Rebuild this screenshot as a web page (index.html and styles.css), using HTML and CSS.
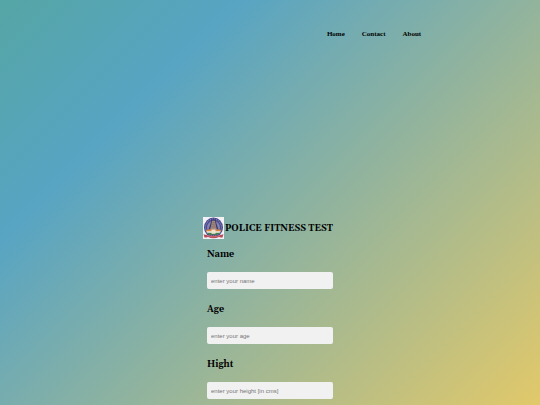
FILE: index.html
```html
<!DOCTYPE html>
<html lang="en">
<head>
    <meta charset="UTF-8">
    <meta name="viewport" content="width=device-width, initial-scale=1.0">
    <title>Police Fitness Test</title>
    <link rel="stylesheet" href="styles.css">
</head>
<body>
    <nav class="navbar">
        <a href="#home">Home</a>
        <a href="#contact">Contact</a>
        <a href="#about">About</a>
    </nav>

    <form class="container">
        <div class="title">
            <svg class="logo" viewBox="0 0 42 42" preserveAspectRatio="none" aria-hidden="true">
                <rect width="42" height="42" fill="#f3f1f5"/>
                <circle cx="21" cy="20" r="19" fill="#4a4a8e"/>
                <circle cx="21" cy="20" r="16" fill="none" stroke="#8b8abb" stroke-width="2" stroke-dasharray="2 2"/>
                <circle cx="21" cy="20" r="13" fill="#8583b0"/>
                <path d="M17 5h8l2 8 5 14H10l5-14z" fill="#39366f"/>
                <path d="M18 7h6l1 6 3 12H14l3-12z" fill="#a58b7d"/>
                <path d="M18 11h6M17 15h8M16 19h10" stroke="#6d5965"/>
                <path d="M6 25q8-3 15 0 7-3 15 0v3H6z" fill="#d98345"/>
                <path d="M7 27h28l-2 4H9z" fill="#f5f0df"/>
                <path d="M8 30h26l-4 4H12z" fill="#3f8450"/>
                <path d="M17 24h8v8h-8z" fill="#f0e4cc"/>
                <path d="M1 33q20 6 40 0l-2 6q-4 0-7-1-11 5-22 0-3 1-7 1z" fill="#b74c58"/>
                <path d="M9 36q12 4 24 0" fill="none" stroke="#d68b91"/>
            </svg>
            <h1>POLICE FITNESS TEST</h1>
        </div>

        <label for="name">Name</label>
        <input type="text" id="name" placeholder="enter your name">

        <label for="age">Age</label>
        <input type="text" id="age" placeholder="enter your age">

        <label for="height">Hight</label>
        <input type="text" id="height" placeholder="enter your height [in cms]">
    </form>
</body>
</html>
```
FILE: styles.css
```css
* {
    box-sizing: border-box;
}

body {
    margin: 0;
    min-height: 100vh;
    background: linear-gradient(135deg, #55a6a5, #57a4c3 25%, #e3c969) no-repeat;
    font-family: Gelasio, "Liberation Serif", serif;
    color: #000;
}

.navbar {
    display: flex;
    justify-content: flex-end;
    gap: 17px;
    padding: 29px 22% 0 0;
}

.navbar a {
    font: bold 7px/10px "Liberation Serif", serif;
    color: #000;
    text-decoration: none;
}

.container {
    display: flex;
    flex-direction: column;
    width: 126px;
    margin: 178px auto 0;
}

.title {
    display: flex;
    align-items: center;
    justify-content: flex-end;
    gap: 1px;
    margin-bottom: 8px;
}

.logo {
    flex: none;
    width: 21px;
    height: 22px;
}

h1 {
    margin: 0;
    padding-top: 2px;
    font-size: 9px;
    line-height: 16px;
    white-space: nowrap;
}

label {
    margin-bottom: 9px;
    font-size: 9px;
    font-weight: bold;
    line-height: 16px;
}

input {
    width: 100%;
    height: 17px;
    margin-bottom: 13px;
    padding: 0 4px;
    border: none;
    border-radius: 2px;
    background-color: #f1f1f1;
    font: 6px "Liberation Sans", sans-serif;
}

input::placeholder {
    color: #757575;
}
```
